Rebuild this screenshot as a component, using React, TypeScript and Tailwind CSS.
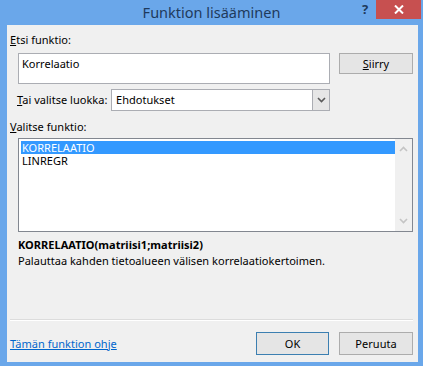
const font = "font-['Segoe_UI','Noto_Sans',sans-serif]";

function Chevron({ dir, color }: { dir: "up" | "down"; color: string }) {
  return (
    <svg width="9" height="6" viewBox="0 0 9 6">
      <path
        d={dir === "down" ? "M1 1 L4.5 4.5 L8 1" : "M1 5 L4.5 1.5 L8 5"}
        fill="none"
        stroke={color}
        strokeWidth="1.6"
      />
    </svg>
  );
}

export default function App() {
  return (
    <div className={`flex h-[366px] w-[423px] flex-col bg-[#6aa7ea] text-[11px] tracking-[0.02px] text-black ${font}`}>
      {/* title bar */}
      <div className="relative h-[25px] shrink-0">
        <div className="pt-[2px] text-center text-[14.5px] leading-[20px] tracking-normal text-[#1e3a5c]">Funktion lisääminen</div>
        <div className="absolute left-[362px] top-[1px] text-[13px] font-bold leading-[16px] text-[#1e3a5c]">?</div>
        <div className="absolute left-[376px] top-0 flex h-[19px] w-[45px] items-center justify-center bg-[#c75050]">
          <svg width="10" height="9" viewBox="0 0 10 9">
            <path d="M1 0.5 L9 8.5 M9 0.5 L1 8.5" stroke="#fff" strokeWidth="2" />
          </svg>
        </div>
      </div>

      {/* client area */}
      <div className="mb-[4px] ml-[7px] mr-[5px] flex flex-1 flex-col bg-[#f0f0f0] pl-[3px] pr-[5px] pt-[7px]">
        <div className="leading-[16px]">
          <span className="underline">E</span>tsi funktio:
        </div>

        <div className="mt-[5px] flex items-start">
          <div className="ml-[8px] h-[31px] w-[312px] border border-[#abadb3] bg-white px-[3px] pt-[2px] leading-[16px]">
            Korrelaatio
          </div>
          <button className="ml-[9px] h-[21px] w-[74px] border border-[#acacac] bg-[#e5e5e5] leading-[16px]">
            <span className="underline">S</span>iirry
          </button>
        </div>

        <div className="mt-[5px] flex items-center">
          <div className="ml-[7px] w-[94px] whitespace-nowrap leading-[16px]">
            <span className="underline">T</span>ai valitse luokka:
          </div>
          <div className="flex h-[22px] w-[219px] border border-[#abadb3] bg-white">
            <div className="flex-1 pl-[4px] leading-[20px]">Ehdotukset</div>
            <div className="flex w-[17px] items-center justify-center border-l border-[#abadb3] bg-[#e6e6e6]">
              <Chevron dir="down" color="#5a5a5a" />
            </div>
          </div>
        </div>

        <div className="mt-[8px] leading-[16px]">
          <span className="underline">V</span>alitse funktio:
        </div>

        <div className="ml-[8px] mt-[3px] flex h-[94px] w-[395px] border border-[#828790] bg-white">
          <div className="flex-1 pl-[2px] pt-[2px] leading-[13px]">
            <div className="bg-[#3399ff] pl-[1px] text-white">KORRELAATIO</div>
            <div className="pl-[1px]">LINREGR</div>
          </div>
          <div className="flex w-[17px] flex-col items-center justify-between bg-[#f0f0f0] py-[7px]">
            <Chevron dir="up" color="#c4c4c4" />
            <Chevron dir="down" color="#c4c4c4" />
          </div>
        </div>

        <div className="ml-[8px] mt-[5px] font-bold leading-[16px]">KORRELAATIO(matriisi1;matriisi2)</div>
        <div className="ml-[8px] leading-[16px]">Palauttaa kahden tietoalueen välisen korrelaatiokertoimen.</div>

        <div className="flex-1" />

        <div className="border-t border-[#dcdcdc] border-b border-b-white" />

        <div className="flex items-center pb-[7px] pt-[11px]">
          <a className="flex-1 text-[#0066cc] underline leading-[16px]">Tämän funktion ohje</a>
          <button className="h-[23px] w-[73px] border border-[#3c7fb1] bg-[#e5e5e5] leading-[16px]">OK</button>
          <button className="ml-[10px] h-[23px] w-[74px] border border-[#acacac] bg-[#e5e5e5] leading-[16px]">Peruuta</button>
        </div>
      </div>
    </div>
  );
}
